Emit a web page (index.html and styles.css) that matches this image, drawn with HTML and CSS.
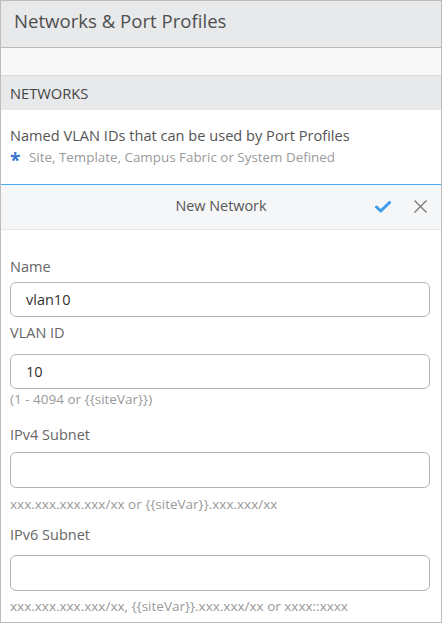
FILE: index.html
```html
<!DOCTYPE html>
<html lang="en">
<head>
<meta charset="utf-8">
<title>Networks &amp; Port Profiles</title>
<link rel="stylesheet" href="styles.css">
</head>
<body>
<div class="panel">
  <header class="panel-header">
    <h1 class="panel-title">Networks &amp; Port Profiles</h1>
  </header>
  <div class="strip"></div>
  <div class="section-head">NETWORKS</div>
  <div class="section-desc">
    <p class="desc-main">Named VLAN IDs that can be used by Port Profiles</p>
    <p class="desc-note"><span class="star">*</span>Site, Template, Campus Fabric or System Defined</p>
  </div>
  <div class="editor-bar">
    <span class="editor-spacer"></span>
    <span class="editor-title">New Network</span>
    <span class="editor-actions">
      <svg class="icon-check" width="16" height="12" viewBox="0 0 16 12"><polyline points="1.5,6 5.8,10 14.5,1.5" fill="none" stroke="#3d9be9" stroke-width="3" stroke-linecap="round" stroke-linejoin="round"/></svg>
      <svg class="icon-close" width="13" height="13" viewBox="0 0 13 13"><path d="M0.5 0.5 L12.5 12.5 M12.5 0.5 L0.5 12.5" stroke="#7a7a7a" stroke-width="1.3" fill="none"/></svg>
    </span>
  </div>
  <form class="form">
    <div class="field f-name">
      <label class="field-label">Name</label>
      <div class="input">vlan10</div>
    </div>
    <div class="field f-vlan">
      <label class="field-label">VLAN ID</label>
      <div class="input">10</div>
      <div class="hint">(1 - 4094 or {{siteVar}})</div>
    </div>
    <div class="field f-v4">
      <label class="field-label">IPv4 Subnet</label>
      <div class="input"></div>
      <div class="hint">xxx.xxx.xxx.xxx/xx or {{siteVar}}.xxx.xxx/xx</div>
    </div>
    <div class="field f-v6">
      <label class="field-label">IPv6 Subnet</label>
      <div class="input"></div>
      <div class="hint">xxx.xxx.xxx.xxx/xx, {{siteVar}}.xxx.xxx/xx or xxxx::xxxx</div>
    </div>
  </form>
</div>
</body>
</html>
```
FILE: styles.css
```css
* { box-sizing: border-box; }
html, body { margin: 0; padding: 0; background: #fff; }
body { font-family: "Open Sans", "Noto Sans", sans-serif; color: #555; }
p { margin: 0; }

.panel {
  width: 442px;
  height: 623px;
  border: 1px solid #bdbdbd;
  overflow: hidden;
  background: #fff;
}

.panel-header {
  background: #e8e9eb;
  height: 47px;
  border-bottom: 1px solid #b9b9b9;
  padding: 8px 13px 0;
}
.panel-title {
  margin: 0;
  font-size: 18.6px;
  line-height: 24px;
  font-weight: 400;
  color: #4f4f4f;
}

.strip {
  height: 28px;
  background: #f8f8f8;
  border-bottom: 1px solid #d8d8d8;
}

.section-head {
  height: 34px;
  background: #e8e9eb;
  padding: 7px 9px 0;
  font-size: 14.7px;
  line-height: 20px;
  color: #444;
}

.section-desc {
  padding: 14px 9px 16px;
  border-bottom: 1px solid #4aacef;
}
.desc-main { font-size: 14.6px; line-height: 22px; color: #555; }
.desc-note { font-size: 13.4px; line-height: 22px; color: #9a9a9a; }
.star {
  display: inline-block;
  width: 19px;
  color: #3a79cf;
  font-size: 19px;
  font-weight: 700;
  line-height: 10px;
  vertical-align: -5px;
}

.editor-bar {
  height: 45px;
  background: #f5f6f8;
  border-bottom: 1px solid #e8e8e8;
  display: grid;
  grid-template-columns: 1fr auto 1fr;
  align-items: center;
  padding: 0 14px 2px;
}
.editor-title { font-size: 14.4px; line-height: 20px; color: #555; }
.editor-actions {
  display: flex;
  justify-content: flex-end;
  align-items: center;
  gap: 23px;
}
.icon-check { display: block; margin-top: 1px; }
.icon-close { display: block; }

.form { padding: 27px 11px 0 9px; }
.field-label {
  display: block;
  font-size: 14.5px;
  line-height: 20px;
  color: #666;
}
.input {
  height: 35px;
  border: 1px solid #b3b3b3;
  border-radius: 6px;
  padding: 0 15px;
  font-size: 14.5px;
  line-height: 33px;
  color: #333;
  background: #fff;
}
.hint {
  font-size: 13.5px;
  line-height: 18px;
  color: #999;
}

.f-name .field-label { margin-bottom: 5px; }
.f-vlan { margin-top: 6px; }
.f-vlan .field-label { margin-bottom: 11px; }
.f-vlan .hint { margin-top: 1px; }
.f-v4 { margin-top: 17px; }
.f-v4 .field-label { margin-bottom: 7px; }
.f-v4 .input { height: 36px; }
.f-v4 .hint { margin-top: 7px; }
.f-v6 { margin-top: 12px; }
.f-v6 .field-label { margin-bottom: 10px; }
.f-v6 .input { height: 36px; }
.f-v6 .hint { margin-top: 6px; }
```
